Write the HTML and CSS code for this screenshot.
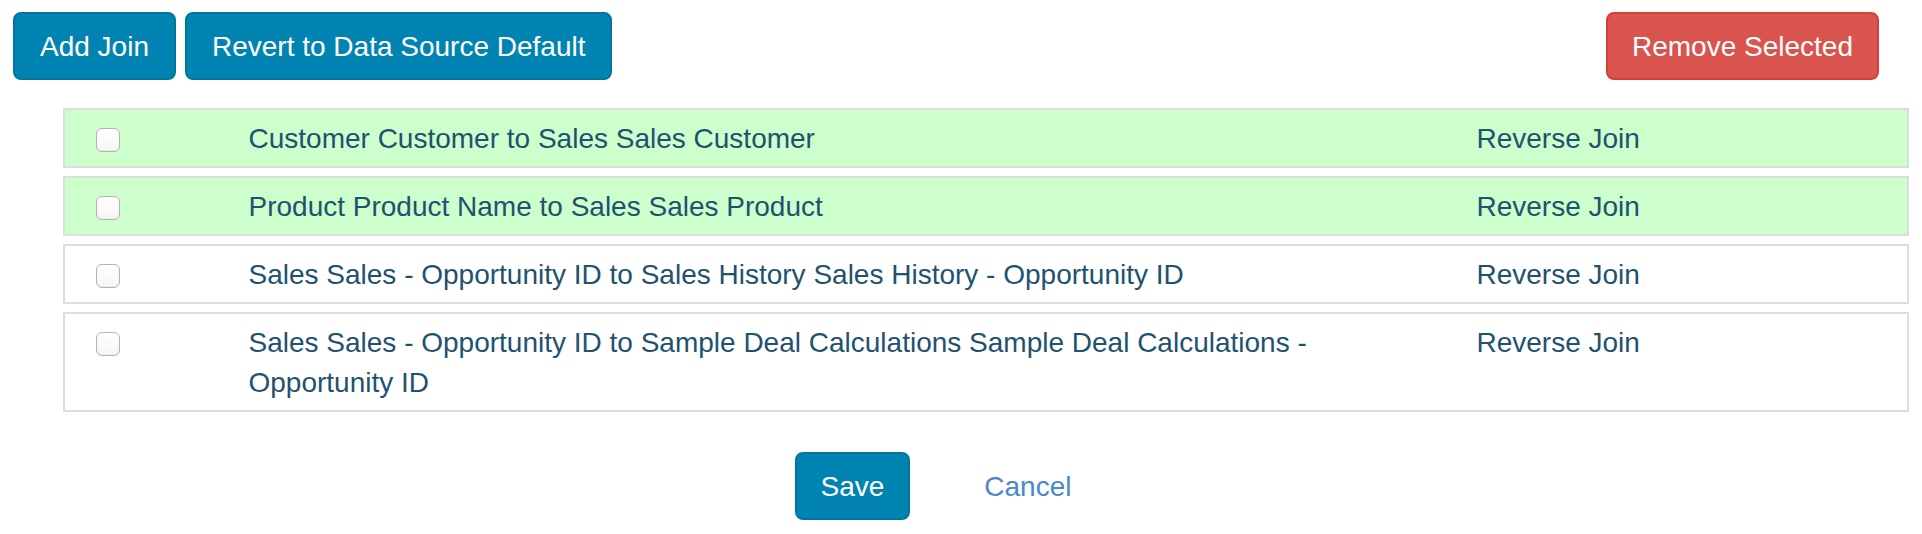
FILE: index.html
```html
<!DOCTYPE html>
<html>
<head>
<meta charset="utf-8">
<link rel="stylesheet" href="styles.css">
</head>
<body>
<div class="page">
  <div class="toolbar">
    <div class="group">
      <button class="btn btn-primary btn-add">Add Join</button>
      <button class="btn btn-primary">Revert to Data Source Default</button>
    </div>
    <button class="btn btn-danger">Remove Selected</button>
  </div>
  <div class="joins">
    <div class="join-row active">
      <div class="col-check"><input type="checkbox" class="cb"></div>
      <div class="col-name">Customer Customer to Sales Sales Customer</div>
      <div class="col-action">Reverse Join</div>
    </div>
    <div class="join-row active">
      <div class="col-check"><input type="checkbox" class="cb"></div>
      <div class="col-name">Product Product Name to Sales Sales Product</div>
      <div class="col-action">Reverse Join</div>
    </div>
    <div class="join-row">
      <div class="col-check"><input type="checkbox" class="cb"></div>
      <div class="col-name">Sales Sales - Opportunity ID to Sales History Sales History - Opportunity ID</div>
      <div class="col-action">Reverse Join</div>
    </div>
    <div class="join-row">
      <div class="col-check"><input type="checkbox" class="cb"></div>
      <div class="col-name">Sales Sales - Opportunity ID to Sample Deal Calculations Sample Deal Calculations - Opportunity ID</div>
      <div class="col-action">Reverse Join</div>
    </div>
  </div>
  <div class="footer">
    <button class="btn btn-primary">Save</button>
    <button class="btn btn-link">Cancel</button>
  </div>
</div>
</body>
</html>
```
FILE: styles.css
```css
* { box-sizing: border-box; }
html, body {
  margin: 0;
  padding: 0;
  background: #ffffff;
}
body {
  font-family: "Liberation Sans", Arial, Helvetica, sans-serif;
  font-size: 28px;
  line-height: 40px;
  color: #1f5270;
}
.page {
  padding-top: 12px;
}
.toolbar {
  display: flex;
  justify-content: space-between;
  align-items: flex-start;
  padding: 0 43px 0 13px;
}
.group {
  display: flex;
  gap: 9px;
}
.btn {
  font-family: "Liberation Sans", Arial, Helvetica, sans-serif;
  font-size: 28px;
  line-height: 40px;
  padding: 13px 25px 11px;
  border: 2px solid transparent;
  border-radius: 8px;
  color: #ffffff;
  cursor: pointer;
  height: 68px;
  white-space: nowrap;
}
.btn-primary {
  background: #0184b2;
  border-color: #02759f;
}
.btn-danger {
  background: #d9534f;
  border-color: #d43f3a;
  padding-left: 24px;
  padding-right: 24px;
}
.btn-link {
  background: transparent;
  border-color: transparent;
  color: #4a88c9;
}
.joins {
  margin-top: 28px;
  padding: 0 13px 0 63px;
  display: flex;
  flex-direction: column;
  gap: 8px;
}
.join-row {
  display: grid;
  grid-template-columns: 1fr 8fr 3fr;
  border: 2px solid #dddddd;
  padding: 9px 0 7px;
  background: #ffffff;
}
.join-row.active {
  background: #ccffcc;
}
.col-check, .col-name, .col-action {
  padding: 0 30px;
}
.col-check {
  display: flex;
  align-items: flex-start;
}
.cb {
  appearance: none;
  -webkit-appearance: none;
  margin: 9px 0 0 1px;
  width: 24px;
  height: 24px;
  border: 1px solid #b3b3b3;
  border-radius: 6px;
  background: linear-gradient(#ffffff, #f6f6f6);
  box-shadow: inset 0 -1px 1px rgba(0,0,0,0.05);
}
.footer {
  margin-top: 40px;
  display: flex;
  justify-content: center;
  gap: 48px;
  padding-right: 30px;
}
.footer .btn-primary {
  padding-left: 24px;
  padding-right: 24px;
}
.footer .btn-link {
  padding: 13px 24px 11px;
}
```
